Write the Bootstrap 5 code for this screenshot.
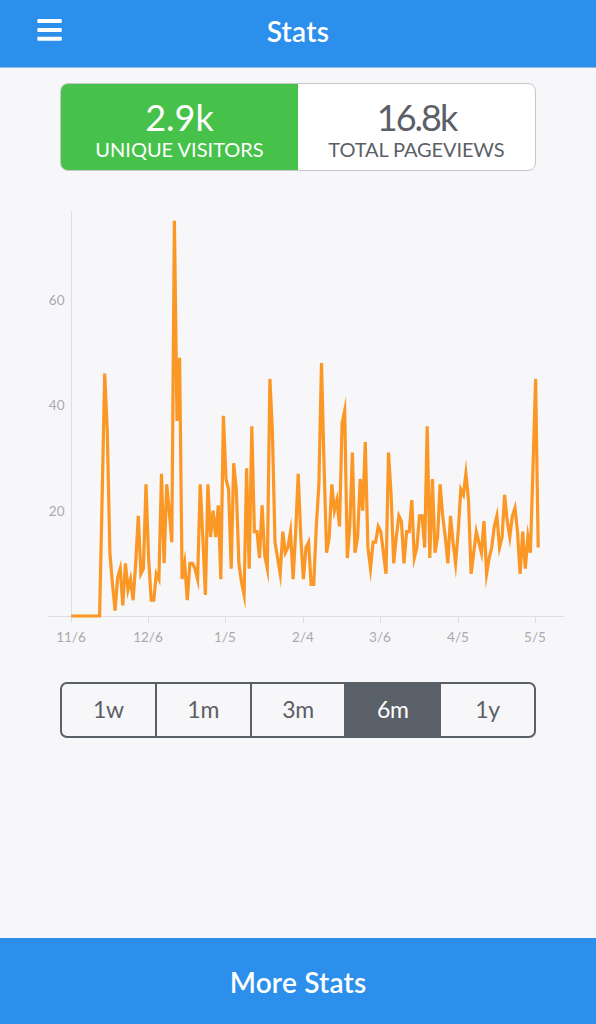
<!DOCTYPE html>
<html lang="en">
<head>
<meta charset="utf-8">
<meta name="viewport" content="width=device-width, initial-scale=1">
<title>Stats</title>
<link href="https://cdn.jsdelivr.net/npm/bootstrap@5.3.0/dist/css/bootstrap.min.css" rel="stylesheet">
<style>
body{background:#f7f6f9;font-family:Lato,"Open Sans",sans-serif;color:#5c5f66}
.topbar{height:68px;background:#2b8feb;border-bottom:1px solid #8dbdec;padding:0 37px 8px}
.side{width:25px}
.bar-title{font-size:28px;font-weight:600;line-height:34px;letter-spacing:.3px;padding-top:3px}
.wide{width:476px}
.totals{height:88px;margin-top:15px;border:1px solid #c6c6cc;border-radius:8px;overflow:hidden;background:#fff}
.total-on{background:#46c14a;color:#fff;margin:-1px 0 -1px -1px;border:1px solid #5bbb62;border-right:0;border-radius:8px 0 0 8px;flex:0 0 238px}
.total-off{flex:1 1 0}
.total-num{font-size:36px;line-height:40px;padding-top:13px}
.total-off .total-num{letter-spacing:-2px}
.total-name{font-size:20px;line-height:24px}
.total-off .total-name{letter-spacing:-.1px}
.chart{height:455px;margin-top:29px}
.chart text{font-size:13.5px;fill:#aaaaae}
.ranges{height:56px;margin-top:27px}
.ranges .btn{--bs-btn-color:#5c5f66;--bs-btn-border-color:#5a6068;--bs-btn-border-width:2px;--bs-btn-border-radius:7px;--bs-btn-font-size:23px;--bs-btn-line-height:1;--bs-btn-active-bg:#5a6068;--bs-btn-active-border-color:#5a6068;--bs-btn-active-color:#fff;--bs-btn-padding-x:0;flex:1 1 0;padding-bottom:7px;letter-spacing:-.3px}
.ranges.btn-group>.btn:not(:first-child){margin-left:-2px}
.more{height:86px;background:#2b8feb;font-size:28px;font-weight:600;letter-spacing:.2px;padding-top:1px}
</style>
</head>
<body>
<div class="d-flex flex-column vh-100">
  <header class="topbar d-flex align-items-center justify-content-between text-white flex-shrink-0">
    <svg class="side" height="24" viewBox="0 0 25 24" fill="#fff"><rect x=".3" y="1" width="24.500" height="4" rx="1"/><rect x=".3" y="10" width="24.500" height="4" rx="1"/><rect x=".3" y="18.700" width="24.500" height="4" rx="1"/></svg>
    <h1 class="bar-title mb-0">Stats</h1>
    <span class="side"></span>
  </header>
  <main class="flex-grow-1">
    <section class="totals wide mx-auto d-flex text-center">
      <div class="total-on"><div class="total-num">2.9k</div><div class="total-name">UNIQUE VISITORS</div></div>
      <div class="total-off"><div class="total-num">16.8k</div><div class="total-name">TOTAL PAGEVIEWS</div></div>
    </section>
    <svg class="chart d-block w-100" viewBox="0 200 596 455">
      <path d="M71.5 211V616M48 616.5H564" fill="none" stroke="#dedde1"/>
      <g id="ticks" text-anchor="middle"></g>
      <g text-anchor="end"><text x="64.500" y="304.500">60</text><text x="64.500" y="410">40</text><text x="64.500" y="515.500">20</text></g>
      <polyline id="series" fill="none" stroke="#fa9725" stroke-width="3.2" stroke-miterlimit="10"/>
    </svg>
    <div class="ranges wide mx-auto btn-group d-flex">
      <button class="btn">1w</button><button class="btn">1m</button><button class="btn">3m</button><button class="btn active">6m</button><button class="btn">1y</button>
    </div>
  </main>
  <footer class="more d-flex align-items-center justify-content-center text-white flex-shrink-0">More Stats</footer>
</div>
<script src="https://cdn.jsdelivr.net/npm/bootstrap@5.3.0/dist/js/bootstrap.bundle.min.js"></script>
<script>
// Unique visitors per day
const visits = [
0,0,0,0,0,0,0,0,0,0,0,0,23,46,35,12,6,1,7.3,9,
2,10,5,7,3,10,19,8,9,25,11,3,3,8,7,27,10,25,20,14,
75,37,49,7,10,3,10,10,9,7,25,15,4,25,15,20,15,21,7,38,
26,24,9,29,24,10,6.4,4,28,9,36,16,16,11,21,11.5,9,45,35,14,
11,8,16,12,13,16,7,16,27,15,7,13,14,6,6,17,25,48,29,12,
15,25,20,22,17,36.6,39,11,17,31,12,15,26,20,33,13,9,14,14,17,
16,12,8,31,23,10,15,19,18,10,16,16,22,11,13,19,19,13,36,11,
26,12,15,25,19,15,10,19,14,10,16,24,23,27,22,8,12,16,14,12,
18,8,11,13,17,19,13,15,23,18,15,19,20.5,16,8,16,9,15,12,28,
45,13];
const step = 464.4 / 180;
document.getElementById('series').setAttribute('points',
  visits.map((v, i) => (71.2 + i * step).toFixed(1) + ',' + (616 - v * 5.27).toFixed(1)).join(' '));
document.getElementById('ticks').innerHTML = ['11/6','12/6','1/5','2/4','3/6','4/5','5/5'].map((t, i) => {
  const x = Math.floor(71 + i * 77.4) + .5;
  return `<path d="M${x} 617v6" stroke="#dedde1"/><text x="${x - .5}" y="641.500">${t}</text>`;
}).join('');
</script>
</body>
</html>
